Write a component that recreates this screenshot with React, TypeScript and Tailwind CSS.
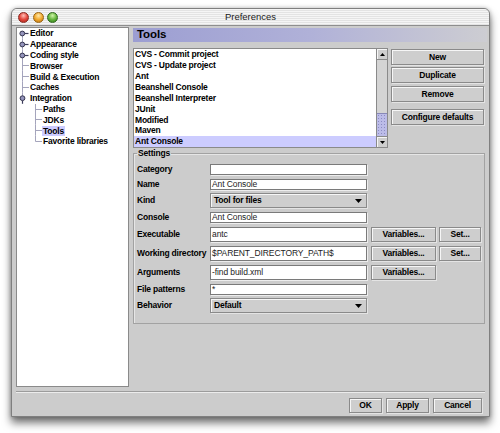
import React from 'react';

type TreeRow = {
  label: string;
  level: 0 | 1;
  kind: 'closed' | 'open' | 'leaf';
  first?: boolean;
  last?: boolean;
  selected?: boolean;
};

const treeRows: TreeRow[] = [
  { label: 'Editor', level: 0, kind: 'closed', first: true },
  { label: 'Appearance', level: 0, kind: 'closed' },
  { label: 'Coding style', level: 0, kind: 'closed' },
  { label: 'Browser', level: 0, kind: 'leaf' },
  { label: 'Build & Execution', level: 0, kind: 'leaf' },
  { label: 'Caches', level: 0, kind: 'leaf' },
  { label: 'Integration', level: 0, kind: 'open', last: true },
  { label: 'Paths', level: 1, kind: 'leaf' },
  { label: 'JDKs', level: 1, kind: 'leaf' },
  { label: 'Tools', level: 1, kind: 'leaf', selected: true },
  { label: 'Favorite libraries', level: 1, kind: 'leaf', last: true },
];

const tools = [
  'CVS - Commit project',
  'CVS - Update project',
  'Ant',
  'Beanshell Console',
  'Beanshell Interpreter',
  'JUnit',
  'Modified',
  'Maven',
  'Ant Console',
];

const LINE = '#a4a4bc';

// tree handles and connector lines for one row
const Gutter = ({ row }: { row: TreeRow }) => {
  const w = row.level === 0 ? 13 : 26;
  const h = 10.8;
  const mid = 5.4;
  return (
    <svg width={w} height={h} viewBox={`0 0 ${w} ${h}`} className="shrink-0">
      {row.level === 0 && (
        <>
          <line
            x1={5.5}
            x2={5.5}
            y1={row.first ? mid : 0}
            y2={row.last ? mid : h}
            stroke={LINE}
            strokeWidth={1}
          />
          {row.kind === 'leaf' && <line x1={5.5} x2={12} y1={5.5} y2={5.5} stroke={LINE} strokeWidth={1} />}
          {row.kind === 'closed' && (
            <>
              <line x1={7.5} x2={11.5} y1={5.5} y2={5.5} stroke="#3c3c5c" strokeWidth={1.2} />
              <circle cx={5.3} cy={5.5} r={2.4} fill="#9494bc" stroke="#34344e" strokeWidth={1} />
            </>
          )}
          {row.kind === 'open' && (
            <>
              <line x1={5.5} x2={5.5} y1={7.5} y2={h} stroke="#3c3c5c" strokeWidth={1.2} />
              <circle cx={5.5} cy={5.2} r={2.4} fill="#9494bc" stroke="#34344e" strokeWidth={1} />
            </>
          )}
        </>
      )}
      {row.level === 1 && (
        <>
          <line x1={18.5} x2={18.5} y1={0} y2={row.last ? 5.5 : h} stroke={LINE} strokeWidth={1} />
          <line x1={18.5} x2={25} y1={5.5} y2={5.5} stroke={LINE} strokeWidth={1} />
        </>
      )}
    </svg>
  );
};

const Button = ({ children, className = '' }: { children: React.ReactNode; className?: string }) => (
  <div
    className={`flex items-center justify-center border border-[#8a8a8a] bg-[#cecece] shadow-[inset_1px_1px_0_#f6f6f6,1px_1px_0_#e4e4e4] text-[8.5px] font-bold tracking-[-0.2px] leading-none ${className}`}
  >
    {children}
  </div>
);

const Field = ({ value = '' }: { value?: string }) => (
  <div className="w-[157px] h-full flex items-center bg-white border border-[#7a7a7a] shadow-[1px_1px_0_#ededed] pl-[1px] text-[8.5px] tracking-[-0.1px] text-[#1c1c1c] leading-none">
    {value}
  </div>
);

const Combo = ({ value }: { value: string }) => (
  <div className="w-[157px] h-full flex items-center justify-between border border-[#8a8a8a] bg-[#cecece] shadow-[inset_1px_1px_0_#f6f6f6,1px_1px_0_#e4e4e4] pl-[3px] pr-[4px] text-[8.5px] font-bold tracking-[-0.2px] leading-none">
    <span>{value}</span>
    <svg width="7" height="4" viewBox="0 0 7 4">
      <path d="M0 0h7L3.5 4z" fill="#000" />
    </svg>
  </div>
);

const Label = ({ children }: { children: React.ReactNode }) => (
  <div className="w-[73px] shrink-0 text-[8.5px] font-bold tracking-[-0.2px] leading-none">{children}</div>
);

export default function App() {
  return (
    <div className="w-[500px] h-[433px] bg-white pt-[8px] pl-[11px] font-['Liberation_Sans',Arial,sans-serif] text-black">
      <div className="w-[479px] h-[409px] flex flex-col bg-[#cccccc] border border-[#7f7f7f] rounded-t-[6px] shadow-[0_6px_9px_rgba(0,0,0,0.55),0_0_4px_rgba(0,0,0,0.25)]">
        {/* title bar */}
        <div className="h-[17px] shrink-0 grid grid-cols-[1fr_auto_1fr] items-center rounded-t-[5px] border-b border-[#8e8e8e] bg-[repeating-linear-gradient(180deg,#f5f5f5_0px,#f5f5f5_1px,#e3e3e3_1px,#e3e3e3_2px)]">
          <div className="flex items-center gap-[3.5px] pl-[6px]">
            <div className="w-[11px] h-[11px] rounded-full border border-[#8a2a22] bg-[radial-gradient(circle_at_50%_30%,#ffc0b8_0%,#e4483c_50%,#a8241a_100%)]" />
            <div className="w-[11px] h-[11px] rounded-full border border-[#9a6410] bg-[radial-gradient(circle_at_50%_30%,#ffe8a8_0%,#f2aa30_50%,#b87010_100%)]" />
            <div className="w-[11px] h-[11px] rounded-full border border-[#2f6a1c] bg-[radial-gradient(circle_at_50%_30%,#d0f4a8_0%,#68b840_50%,#2f7a1a_100%)]" />
          </div>
          <div className="text-[9.5px] text-[#1a1a1a] leading-none">Preferences</div>
          <div />
        </div>

        {/* body */}
        <div className="h-[365px] shrink-0 flex pl-[4px]">
          {/* tree */}
          <div className="mt-[1px] w-[113px] h-[360px] bg-white border border-[#8a8a8a]">
            {treeRows.map((row) => (
              <div key={row.label} className="h-[10.8px] flex items-center">
                <Gutter row={row} />
                <span
                  className={`text-[8.5px] font-bold tracking-[-0.2px] leading-[10px] ${
                    row.selected ? 'bg-[#ccccff] px-[1px] -ml-[1px]' : ''
                  }`}
                >
                  {row.label}
                </span>
              </div>
            ))}
          </div>

          {/* right side */}
          <div className="ml-[4px] w-[354px] flex flex-col">
            <div className="mt-[2px] h-[14px] flex items-center pl-[4px] bg-[linear-gradient(90deg,#9c9ed2_0%,#b0b1d8_50%,#cdcdd2_100%)] text-[11.5px] font-bold tracking-[-0.1px] leading-none">
              Tools
            </div>

            <div className="mt-[6px] h-[100px] flex gap-[3px]">
              <div className="w-[255px] h-full flex bg-white border border-[#8a8a8a]">
                <div className="flex-1 flex flex-col">
                  {tools.map((t, i) => (
                    <div
                      key={t}
                      className={`flex-1 flex items-center pl-[1px] text-[8.5px] font-bold tracking-[-0.2px] leading-none ${
                        i === tools.length - 1 ? 'bg-[#ccccff]' : ''
                      }`}
                    >
                      {t}
                    </div>
                  ))}
                </div>
                {/* scrollbar */}
                <div className="w-[11px] flex flex-col border-l border-[#8a8a8a] bg-[#d4d4d4]">
                  <div className="h-[11px] shrink-0 flex items-center justify-center border-b border-[#8a8a8a] bg-[#cecece] shadow-[inset_1px_1px_0_#f6f6f6]">
                    <svg width="5" height="3" viewBox="0 0 5 3">
                      <path d="M0 3h5L2.5 0z" fill="#000" />
                    </svg>
                  </div>
                  <div className="flex-1 flex flex-col justify-end">
                    <div className="h-[23px] border-t border-[#8888b8] bg-[#bcbce8] bg-[radial-gradient(circle,#8c8cc4_0.7px,transparent_0.9px)] bg-[length:3px_3px]" />
                  </div>
                  <div className="h-[11px] shrink-0 flex items-center justify-center border-t border-[#8a8a8a] bg-[#cecece] shadow-[inset_1px_1px_0_#f6f6f6]">
                    <svg width="5" height="3" viewBox="0 0 5 3">
                      <path d="M0 0h5L2.5 3z" fill="#000" />
                    </svg>
                  </div>
                </div>
              </div>

              <div className="w-[93px] flex flex-col">
                <Button className="mt-[1px] h-[16px]">New</Button>
                <Button className="mt-[2px] h-[16px]">Duplicate</Button>
                <Button className="mt-[3px] h-[16px]">Remove</Button>
                <Button className="mt-[7px] h-[16px]">Configure defaults</Button>
              </div>
            </div>

            <fieldset className="w-[352px] h-[176px] border border-[#a2a2a2] shadow-[inset_1px_1px_0_#e6e6e6] pl-[3px] pt-[6px]">
              <legend className="px-[1px] text-[8.5px] font-bold tracking-[-0.2px] leading-[10px]">Settings</legend>
              <div className="flex flex-col">
                <div className="h-[11px] flex items-center">
                  <Label>Category</Label>
                  <Field />
                </div>
                <div className="mt-[4px] h-[11px] flex items-center">
                  <Label>Name</Label>
                  <Field value="Ant Console" />
                </div>
                <div className="mt-[3px] h-[15px] flex items-center">
                  <Label>Kind</Label>
                  <Combo value="Tool for files" />
                </div>
                <div className="mt-[4px] h-[11px] flex items-center">
                  <Label>Console</Label>
                  <Field value="Ant Console" />
                </div>
                <div className="mt-[4px] h-[15px] flex items-center">
                  <Label>Executable</Label>
                  <Field value="antc" />
                  <Button className="ml-[4px] w-[65px] h-full">Variables...</Button>
                  <Button className="ml-[3px] w-[42px] h-full">Set...</Button>
                </div>
                <div className="mt-[4px] h-[15px] flex items-center">
                  <Label>Working directory</Label>
                  <Field value="$PARENT_DIRECTORY_PATH$" />
                  <Button className="ml-[4px] w-[65px] h-full">Variables...</Button>
                  <Button className="ml-[3px] w-[42px] h-full">Set...</Button>
                </div>
                <div className="mt-[4px] h-[15px] flex items-center">
                  <Label>Arguments</Label>
                  <Field value="-find build.xml" />
                  <Button className="ml-[4px] w-[65px] h-full">Variables...</Button>
                </div>
                <div className="mt-[4px] h-[11px] flex items-center">
                  <Label>File patterns</Label>
                  <Field value="*" />
                </div>
                <div className="mt-[3px] h-[15px] flex items-center">
                  <Label>Behavior</Label>
                  <Combo value="Default" />
                </div>
              </div>
            </fieldset>
          </div>
        </div>

        {/* separator */}
        <div className="mx-[4px] h-[2px] shrink-0 border-t border-[#9c9c9c] bg-[#ececec]" />

        {/* footer */}
        <div className="flex-1 flex justify-end items-start gap-[4px] pt-[5px] pr-[7px]">
          <Button className="w-[33px] h-[15px]">OK</Button>
          <Button className="w-[43px] h-[15px]">Apply</Button>
          <Button className="w-[49px] h-[15px]">Cancel</Button>
        </div>
      </div>
    </div>
  );
}
